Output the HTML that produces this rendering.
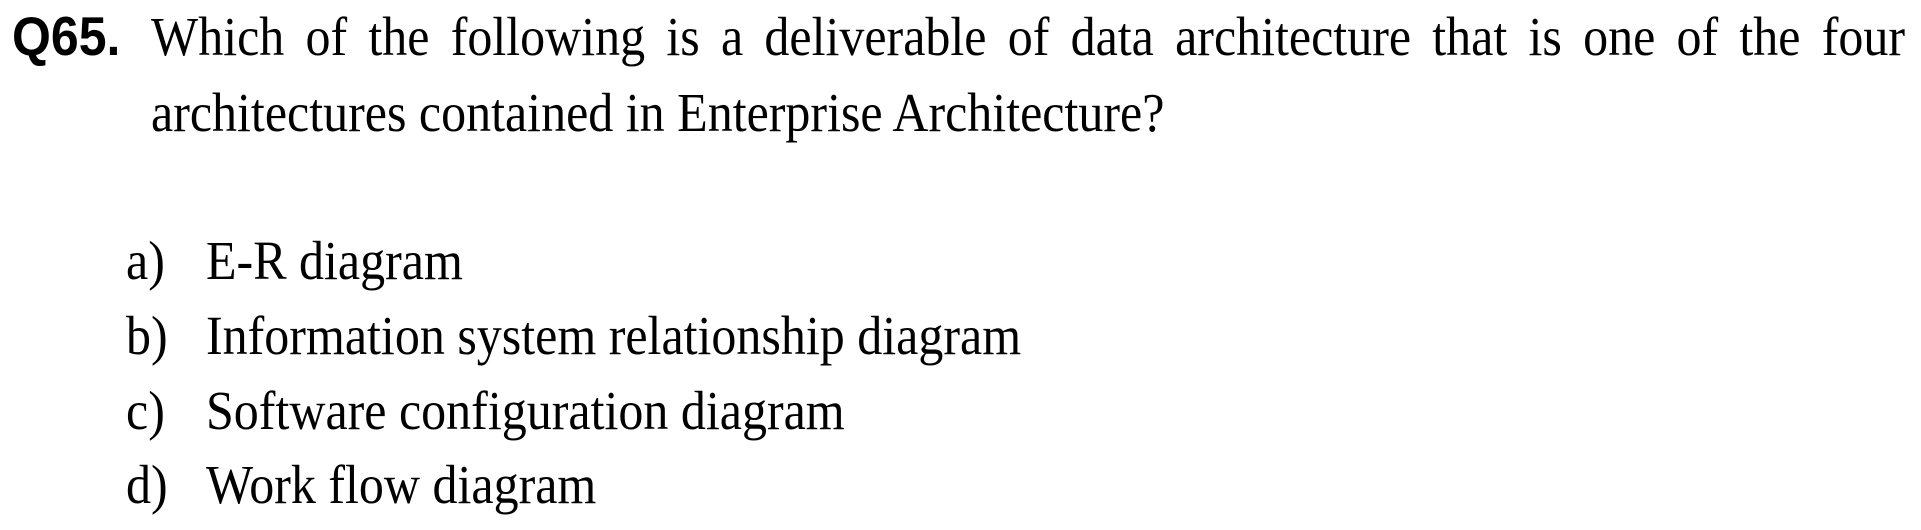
<!DOCTYPE html>
<html><head><meta charset="utf-8"><style>
body{margin:0;width:1921px;height:530px;background:#fff;overflow:hidden;position:relative;font-family:"Liberation Serif",serif;color:#000}
.t{position:absolute;font-size:50px;line-height:50px;white-space:nowrap;transform:scaleY(1.1);transform-origin:0 42px}
.q{font-family:"Liberation Sans",sans-serif;font-weight:bold}
.j{text-align:justify;text-align-last:justify;white-space:normal}
</style></head><body>
<div class="t q" style="left:12px;top:13px">Q65.</div>
<div class="t j" style="left:151px;top:13px;width:1754px">Which of the following is a deliverable of data architecture that is one of the four</div>
<div class="t" style="left:151px;top:89px">architectures contained in Enterprise Architecture?</div>
<div class="t" style="left:126px;top:237px">a)</div><div class="t" style="left:206px;top:237px">E-R diagram</div>
<div class="t" style="left:126px;top:312px">b)</div><div class="t" style="left:206px;top:312px">Information system relationship diagram</div>
<div class="t" style="left:126px;top:387px">c)</div><div class="t" style="left:206px;top:387px">Software configuration diagram</div>
<div class="t" style="left:126px;top:461px">d)</div><div class="t" style="left:206px;top:461px">Work flow diagram</div>
</body></html>
